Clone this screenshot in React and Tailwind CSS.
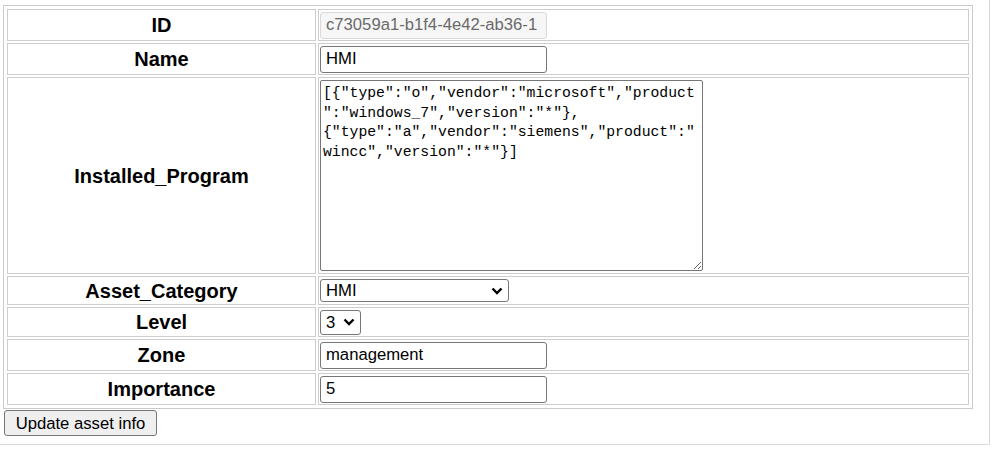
import { useState } from 'react';

const SANS = 'font-["Liberation_Sans",Arial,sans-serif]';

const PROGRAMS =
  '[{"type":"o","vendor":"microsoft","product":"windows_7","version":"*"},\n{"type":"a","vendor":"siemens","product":"wincc","version":"*"}]';

function Chevron() {
  return (
    <svg width="12" height="8" viewBox="0 0 12 8" className="pointer-events-none absolute top-1/2 -translate-y-1/2 right-[6px]">
      <path d="M1.5 1.5 L6 6 L10.5 1.5" fill="none" stroke="#000" strokeWidth="2.4" />
    </svg>
  );
}

function Select({ value, options, className }) {
  const [v, setV] = useState(value);
  return (
    <div className={`relative block ${className}`}>
      <select
        value={v}
        onChange={(e) => setV(e.target.value)}
        className={`block h-full w-full appearance-none rounded-[3px] border border-[#767676] bg-white pl-[5px] text-[16.67px] leading-[19px] text-black outline-none ${SANS}`}
      >
        {options.map((o) => (
          <option key={o}>{o}</option>
        ))}
      </select>
      <Chevron />
    </div>
  );
}

function TextInput({ value, readOnly }) {
  return (
    <input
      type="text"
      defaultValue={value}
      readOnly={readOnly}
      className={`block h-[27px] w-[227px] rounded-[3px] border px-[5px] text-[16.67px] leading-[19px] outline-none ${SANS} ${
        readOnly ? 'border-[#d9d9d9] bg-[#f6f6f6] text-[#6a6a6a]' : 'border-[#767676] bg-white text-black'
      }`}
    />
  );
}

function Row({ label, h, children }) {
  return (
    <tr>
      <th className={`w-[309px] border border-[#cdcdcd] p-0 text-center align-middle text-[20px] leading-[22px] font-bold text-black ${SANS} ${h}`}>
        {label}
      </th>
      <td className={`border border-[#cdcdcd] p-[1px] align-middle leading-none ${h}`}>{children}</td>
    </tr>
  );
}

export default function App() {
  return (
    <div className="h-[445px] w-[990px] border-r border-b border-[#d9d9d9] bg-white">
      <div className="pl-[3px] pt-[5px]">
        <table className="w-[970px] border-separate border-spacing-[2px] border border-[#cbcbcb] p-[1px]">
          <tbody>
            <Row label="ID" h="h-[32px]">
              <TextInput value="c73059a1-b1f4-4e42-ab36-1" readOnly />
            </Row>
            <Row label="Name" h="h-[32px]">
              <TextInput value="HMI" />
            </Row>
            <Row label="Installed_Program" h="h-[197px]">
              <textarea
                defaultValue={PROGRAMS}
                className='block h-[191px] w-[383px] rounded-[2px] border border-[#767676] bg-white px-[2px] pt-[3px] pb-[2px] font-["Liberation_Mono","DejaVu_Sans_Mono",monospace] text-[14.75px] leading-[19.5px] text-black outline-none'
              />
            </Row>
            <Row label="Asset_Category" h="h-[29px]">
              <Select value="HMI" options={['HMI', 'PLC', 'SCADA', 'Server']} className="h-[23px] w-[189px]" />
            </Row>
            <Row label="Level" h="h-[30px]">
              <Select value="3" options={['1', '2', '3', '4', '5']} className="h-[25px] w-[41px]" />
            </Row>
            <Row label="Zone" h="h-[32px]">
              <TextInput value="management" />
            </Row>
            <Row label="Importance" h="h-[32px]">
              <TextInput value="5" />
            </Row>
          </tbody>
        </table>
        <button
          type="button"
          className={`mt-[1px] ml-[1px] block h-[26px] w-[153px] rounded-[3px] border border-[#767676] bg-[#efefef] text-[16.67px] leading-[19px] text-black ${SANS}`}
        >
          Update asset info
        </button>
      </div>
    </div>
  );
}
